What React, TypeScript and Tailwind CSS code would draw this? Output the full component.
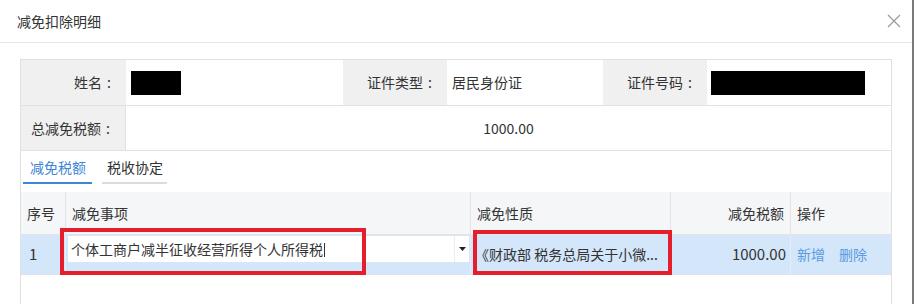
import React from "react";

const font = { fontFamily: '"Noto Sans CJK SC", "Noto Sans", sans-serif' };

function Label({ text, w, border }: { text: string; w: string; border?: boolean }) {
  return (
    <div
      className={`flex items-center justify-end bg-[#f0f0f0] pr-[10px] ${w} ${
        border ? "border-r border-[#e1e1e1]" : ""
      }`}
    >
      <span>{text}</span>
      <span className="inline-block w-[14px] text-center">:</span>
    </div>
  );
}

export default function App() {
  return (
    <div
      className="relative w-[914px] h-[304px] overflow-hidden bg-white text-[14px] text-[#333]"
      style={font}
    >
      {/* dialog right edge */}
      <div className="absolute right-0 top-0 h-full w-[2px] bg-[#7a7a7a]" />

      {/* header */}
      <div className="mr-[2px] flex h-[43px] items-center justify-between border-b border-[#e5e5e5] pl-[17px] pr-[11px]">
        <span className="text-[14px] text-[#333]">减免扣除明细</span>
        <svg width="14" height="14" viewBox="0 0 14 14" className="mt-[-1px]">
          <path d="M1 1L13 13M13 1L1 13" stroke="#9a9a9a" strokeWidth="1.2" />
        </svg>
      </div>

      {/* panel */}
      <div className="ml-[20px] mt-[16px] w-[872px] border border-b-0 border-[#e1e1e1]">
        {/* row 1 */}
        <div className="flex h-[46px] border-b border-[#e1e1e1]">
          <Label text="姓名" w="w-[105px]" />
          <div className="flex w-[217px] items-center pl-[5px]">
            <div className="h-[24px] w-[50px] bg-black" />
          </div>
          <Label text="证件类型" w="w-[104px]" />
          <div className="flex w-[156px] items-center pl-[5px]">居民身份证</div>
          <Label text="证件号码" w="w-[104px]" />
          <div className="flex flex-1 items-center pl-[4px]">
            <div className="h-[24px] w-[154px] bg-black" />
          </div>
        </div>
        {/* row 2 */}
        <div className="flex h-[45px] border-b border-[#e1e1e1]">
          <Label text="总减免税额" w="w-[105px]" border />
          <div className="flex flex-1 items-center justify-center">1000.00</div>
        </div>

        {/* tabs */}
        <div className="flex h-[33px] items-end pl-[2px]">
          <div className="flex h-full flex-col justify-end">
            <div className="flex flex-1 items-center px-[7px] pt-[2px] text-[#3d85d6]">减免税额</div>
            <div className="h-[2px] w-[69px] bg-[#3d85d6]" />
          </div>
          <div className="ml-[9px] flex h-full flex-col justify-end">
            <div className="flex flex-1 items-center px-[5px] pt-[2px]">税收协定</div>
            <div className="h-[2px] w-[65px] bg-[#dcdcdc]" />
          </div>
        </div>

        {/* table */}
        <div className="mt-[8px]">
          <div className="flex h-[43px] border-b border-[#e4e4e4] bg-[#f5f6f8]">
            <div className="flex w-[45px] items-center border-r border-[#e4e4e4] pl-[6px]">序号</div>
            <div className="flex w-[405px] items-center border-r border-[#e4e4e4] pl-[6px]">减免事项</div>
            <div className="flex w-[200px] items-center border-r border-[#e4e4e4] pl-[6px]">减免性质</div>
            <div className="flex w-[120px] items-center justify-end border-r border-[#e4e4e4] pr-[6px]">减免税额</div>
            <div className="flex flex-1 items-center pl-[6px]">操作</div>
          </div>
          <div className="flex h-[40px] border-b border-[#dde3ea] bg-[#d3e6fa]">
            <div className="flex w-[45px] items-center border-r border-[#e4eef9] pl-[8px] text-[15px]">1</div>
            <div className="relative w-[405px] border-r border-[#e4eef9]">
              <div className="absolute left-[2px] top-[1px] flex h-[26px] w-[401px] bg-white">
                <div className="flex flex-1 items-center border-r border-[#ececec] pl-[3px] pt-[1px]">
                  个体工商户减半征收经营所得个人所得税
                  <span className="ml-[1px] inline-block h-[14px] w-[1px] bg-[#333]" />
                </div>
                <div className="flex w-[14px] items-center justify-center">
                  <svg width="7" height="4" viewBox="0 0 7 4">
                    <path d="M0 0H7L3.5 4Z" fill="#222" />
                  </svg>
                </div>
              </div>
            </div>
            <div className="flex w-[200px] items-center border-r border-[#e4eef9] pl-[4px]">
              《财政部 税务总局关于小微...
            </div>
            <div className="flex w-[120px] items-center justify-end border-r border-[#e4eef9] pr-[4px] text-[15px]">
              1000.00
            </div>
            <div className="flex flex-1 items-center gap-[14px] pl-[6px] text-[#5a9be2]">
              <span>新增</span>
              <span>删除</span>
            </div>
          </div>
          <div className="h-[40px]" />
        </div>
      </div>

      {/* red annotation boxes */}
      <div className="absolute left-[60px] top-[228px] h-[47px] w-[306px] border-[4px] border-[#e41e2b]" />
      <div className="absolute left-[473px] top-[230px] h-[45px] w-[199px] border-[4px] border-[#e41e2b]" />
    </div>
  );
}
